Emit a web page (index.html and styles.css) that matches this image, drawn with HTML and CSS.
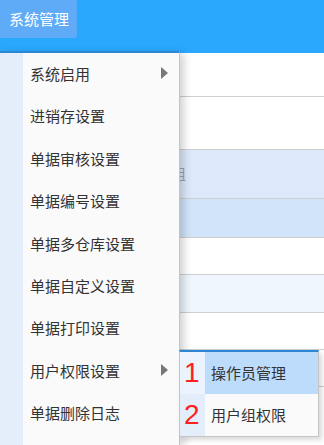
FILE: index.html
```html
<!DOCTYPE html>
<html lang="zh-CN">
<head>
    <meta charset="UTF-8">
    <meta name="viewport" content="width=device-width, initial-scale=1.0">
    <title>系统管理</title>
    <link rel="stylesheet" href="styles.css">
</head>
<body>

<div class="topbar">
    <div class="topbtn">系统管理</div>
</div>

<div class="grid">
    <div class="row">&nbsp;</div>
    <div class="row r2">&nbsp;</div>
    <div class="row r3"><span class="ghost">权限组</span></div>
    <div class="row r4">&nbsp;</div>
    <div class="row r5">&nbsp;</div>
    <div class="row r6">&nbsp;</div>
    <div class="row r7">&nbsp;</div>
    <div class="row r7">&nbsp;</div>
    <div class="row r7 last">&nbsp;</div>
</div>

<div class="menu">
    <div class="item">系统启用<span class="arrow"></span></div>
    <div class="item">进销存设置</div>
    <div class="item">单据审核设置</div>
    <div class="item">单据编号设置</div>
    <div class="item">单据多仓库设置</div>
    <div class="item">单据自定义设置</div>
    <div class="item">单据打印设置</div>
    <div class="item">用户权限设置<span class="arrow"></span></div>
    <div class="item">单据删除日志</div>
</div>

<div class="submenu">
    <div class="subitem active"><span class="num">1</span><span class="label">操作员管理</span></div>
    <div class="subitem"><span class="num">2</span><span class="label">用户组权限</span></div>
</div>

</body>
</html>
```

FILE: styles.css
```css
body {
    margin: 0;
    font-family: "Noto Sans CJK SC", "Noto Sans", sans-serif;
    background: #fff;
    height: 445px;
    overflow: hidden;
}
.topbar {
    height: 53px;
    background-color: #29a8fe;
}
.topbtn {
    width: 77px;
    height: 38px;
    line-height: 38px;
    box-sizing: border-box;
    padding-left: 9px;
    font-size: 15px;
    color: #fff;
    background-color: #60abf8;
    border-radius: 0 0 3px 0;
}
.row {
    height: 44px;
    border-bottom: 1px solid #cfcfcf;
    box-sizing: border-box;
    background: #fff;
    padding-left: 141px;
    font-size: 15px;
    line-height: 48px;
}
.r2 { height: 53px; }
.r3 { height: 49px; background: #dde9fb; }
.r4 { height: 39px; background: #d2e4fa; }
.r5 { height: 37px; }
.r6 { height: 38px; background: #eff6fe; }
.r7 { height: 37px; }
.last { height: 20px; border-bottom: 0; }
.ghost {
    color: #9aa3ae;
}
.menu {
    position: absolute;
    top: 51px;
    left: 0;
    width: 180px;
    height: 394px;
    box-sizing: border-box;
    border-top: 2px solid #2c86d2;
    border-right: 1px solid #c4c4c4;
    background: linear-gradient(to right, #e4eefa 23px, #fafafa 23px);
    box-shadow: 4px 2px 8px rgba(0, 0, 0, 0.18);
}
.item {
    position: relative;
    height: 42.4px;
    line-height: 42.4px;
    padding-left: 30px;
    font-size: 15px;
    color: #333;
}
.arrow {
    position: absolute;
    left: 161px;
    top: 14px;
    width: 0;
    height: 0;
    border-top: 6px solid transparent;
    border-bottom: 6px solid transparent;
    border-left: 7px solid #777;
}
.submenu {
    position: absolute;
    top: 350px;
    left: 179px;
    width: 140px;
    box-sizing: border-box;
    border: 1px solid #c4c4c4;
    border-top: 2px solid #2c86d2;
    background: #fafafa;
    box-shadow: 3px 3px 5px rgba(0, 0, 0, 0.15);
}
.subitem {
    display: flex;
    height: 42px;
    line-height: 42px;
}
.num {
    width: 25px;
    flex: none;
    padding-left: 4px;
    box-sizing: border-box;
    background: #e4eefb;
    color: #ff1f1f;
    font-family: "Liberation Sans", sans-serif;
    font-size: 28px;
}
.active .num {
    background: #eaf3fe;
}
.label {
    flex: 1;
    padding-left: 6px;
    font-size: 15px;
    color: #333;
}
.active .label {
    background: #bddcfb;
}
```
